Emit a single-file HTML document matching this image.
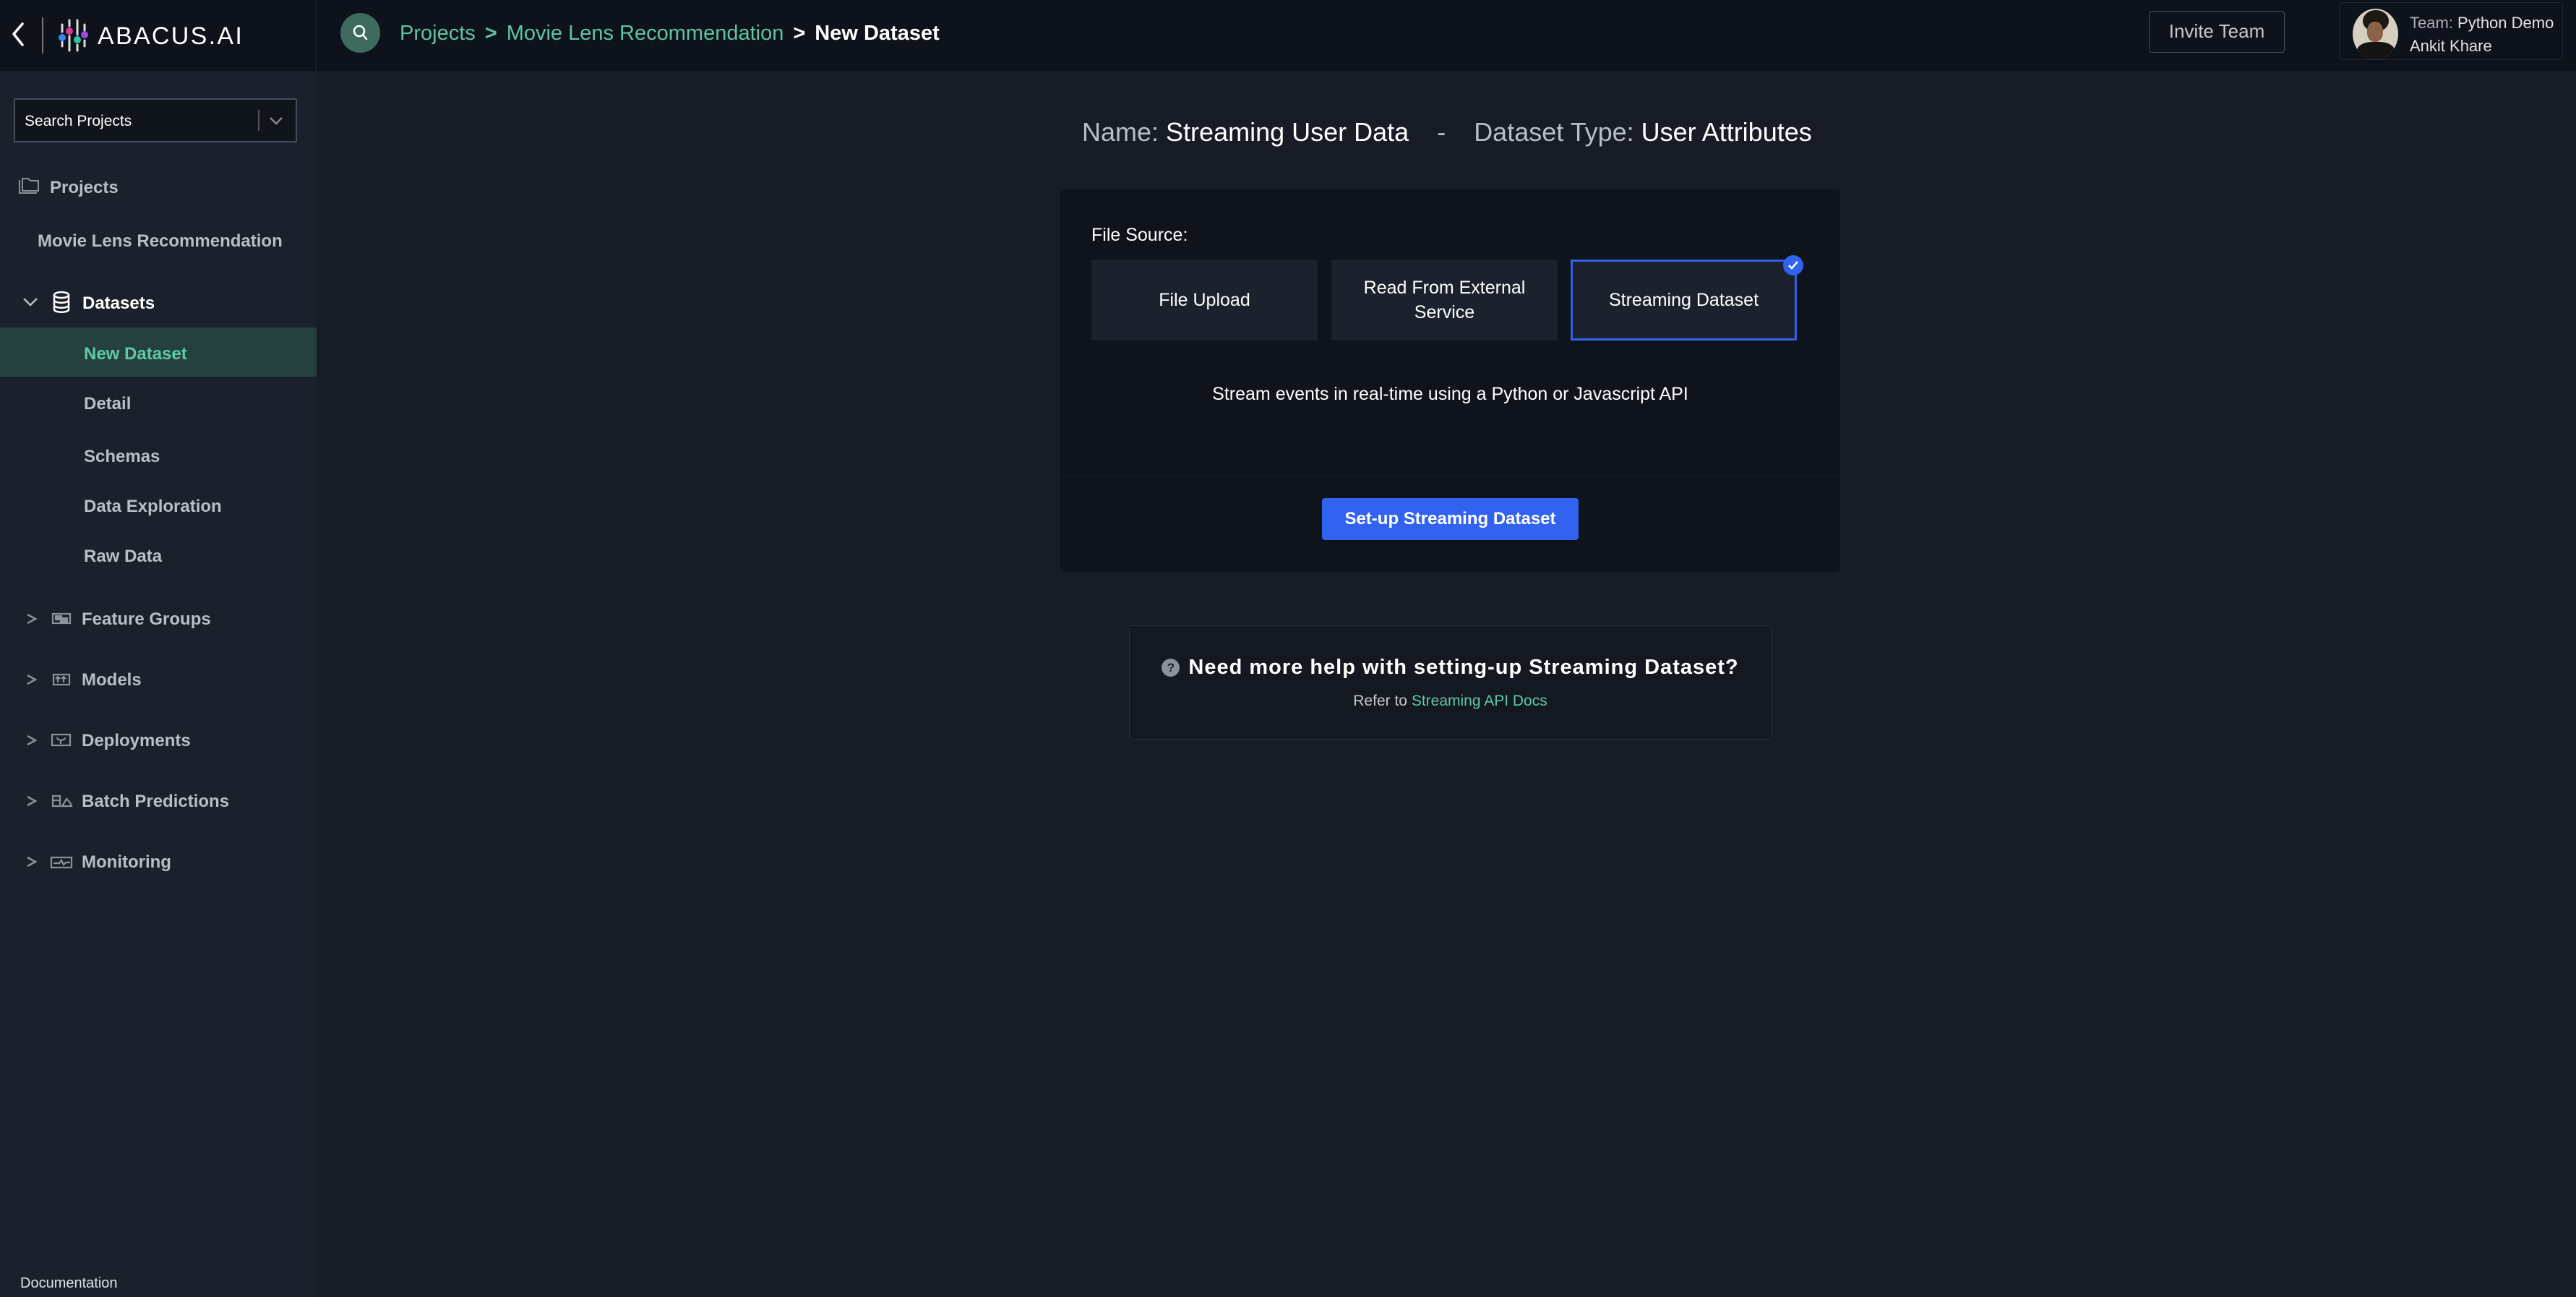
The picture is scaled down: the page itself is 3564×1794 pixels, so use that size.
<!DOCTYPE html>
<html><head><meta charset="utf-8"><style>
*{box-sizing:border-box;margin:0;padding:0}
body{width:3564px;height:1794px;background:#171c26;font-family:"Liberation Sans",sans-serif;position:relative;overflow:hidden;color:#fff}
.abs{position:absolute}
#hdr{left:0;top:0;width:3564px;height:98px;background:#0e121a}
#side{left:0;top:98px;width:438px;height:1696px;background:#1b212c}
.si{position:absolute;font-size:24px;font-weight:bold;color:#b8bdc7;white-space:nowrap;line-height:30px}
</style></head><body>
<div id="hdr" class="abs"></div>
<div class="abs" style="left:436px;top:0;width:2px;height:98px;background:#181d26"></div>
<div id="side" class="abs"></div>
<!-- logo -->
<svg class="abs" style="left:0;top:0" width="438" height="98">
<polyline points="31,33 19,47 31,62" fill="none" stroke="#fff" stroke-width="3.5" stroke-linecap="round" stroke-linejoin="round"/>
<line x1="59" y1="24" x2="59" y2="74" stroke="#777" stroke-width="2"/>
<g stroke="#ddd" stroke-width="3" stroke-linecap="round">
<line x1="86" y1="34" x2="86" y2="44"/><line x1="86" y1="58" x2="86" y2="64"/>
<line x1="96" y1="28" x2="96" y2="36"/><line x1="96" y1="50" x2="96" y2="70"/>
<line x1="107" y1="28" x2="107" y2="48"/><line x1="107" y1="62" x2="107" y2="70"/>
<line x1="117" y1="34" x2="117" y2="42"/><line x1="117" y1="56" x2="117" y2="64"/>
</g>
<circle cx="86" cy="52" r="5" fill="#3b82f6"/><circle cx="96" cy="43" r="5" fill="#d63c8e"/>
<circle cx="107" cy="55" r="5" fill="#2fc4a7"/><circle cx="117" cy="48" r="5" fill="#9b4be0"/>
</svg>
<div class="abs" style="left:135px;top:30px;font-size:34px;letter-spacing:2.3px;color:#fff;line-height:40px">ABACUS.AI</div>
<!-- breadcrumb -->
<div class="abs" style="left:471px;top:18px;width:55px;height:55px;border-radius:50%;background:#3e6a5f"></div>
<svg class="abs" style="left:484px;top:31px" width="30" height="30"><circle cx="13" cy="12" r="7" fill="none" stroke="#fff" stroke-width="2.5"/><line x1="18" y1="17" x2="23" y2="23" stroke="#fff" stroke-width="2.5" stroke-linecap="round"/></svg>
<div class="abs" style="left:553px;top:28px;font-size:29px;line-height:36px;white-space:nowrap;color:#5fc4a2"><span>Projects</span><span style="margin:0 13px;font-weight:bold">&gt;</span><span>Movie Lens Recommendation</span><span style="margin:0 13px;font-weight:bold;color:#fff">&gt;</span><span style="color:#fff;font-weight:bold">New Dataset</span></div>
<!-- header right -->
<div class="abs" style="left:2973px;top:15px;width:188px;height:58px;border:1.5px solid #4a4f58;border-radius:4px;color:#c4c7cd;font-size:26px;line-height:55px;text-align:center">Invite Team</div>
<div class="abs" style="left:3236px;top:3px;width:310px;height:80px;border:1.5px solid #22272f;border-radius:6px"></div>
<div class="abs" style="left:3255px;top:12px;width:63px;height:70px;border-radius:50%;overflow:hidden;background:#d6cfbf">
<div class="abs" style="left:14px;top:2px;width:36px;height:30px;border-radius:50%;background:#1e1814"></div>
<div class="abs" style="left:20px;top:18px;width:22px;height:28px;border-radius:45%;background:#8a6248"></div>
<div class="abs" style="left:6px;top:46px;width:52px;height:30px;border-radius:40% 40% 0 0;background:#141414"></div>
</div>
<div class="abs" style="left:3334px;top:16px;font-size:22px;line-height:32px;color:#dfe2e6;white-space:nowrap"><span style="color:#a9adb5">Team:</span> Python Demo<br>Ankit Khare</div>
<!-- sidebar -->
<div class="abs" style="left:19px;top:136px;width:392px;height:61px;background:#10141b;border:2px solid #474c56;border-radius:2px"></div>
<div class="abs" style="left:34px;top:154px;font-size:21px;color:#fff;line-height:28px">Search Projects</div>
<div class="abs" style="left:357px;top:152px;width:2px;height:29px;background:#555"></div>
<svg class="abs" style="left:370px;top:157px" width="24" height="20"><polyline points="4,6 12,14 20,6" fill="none" stroke="#888" stroke-width="2.5"/></svg>

<svg class="abs" style="left:25px;top:245px" width="32" height="26"><path d="M2 4v18h24M6 2h8l3 3h11v14H6z" fill="none" stroke="#8b9099" stroke-width="2"/></svg>
<div class="si" style="left:69px;top:245px">Projects</div>
<div class="si" style="left:52px;top:319px">Movie Lens Recommendation</div>
<svg class="abs" style="left:29px;top:407px" width="26" height="20"><polyline points="4,6 13,15 22,6" fill="none" stroke="#b8bdc7" stroke-width="2.5"/></svg>
<svg class="abs" style="left:72px;top:402px" width="28" height="32"><ellipse cx="13" cy="6" rx="10" ry="4" fill="none" stroke="#fff" stroke-width="2.5"/><path d="M3 6v20c0 5 20 5 20 0V6M3 13c0 5 20 5 20 0M3 20c0 5 20 5 20 0" fill="none" stroke="#fff" stroke-width="2.5"/></svg>
<div class="si" style="left:114px;top:405px;color:#fff">Datasets</div>
<div class="abs" style="left:0;top:453px;width:438px;height:68px;background:#24413f"></div>
<div class="si" style="left:116px;top:475px;color:#5fc9a4">New Dataset</div>
<div class="si" style="left:116px;top:544px">Detail</div>
<div class="si" style="left:116px;top:617px">Schemas</div>
<div class="si" style="left:116px;top:686px">Data Exploration</div>
<div class="si" style="left:116px;top:755px">Raw Data</div>

<svg class="abs" style="left:0;top:826px" width="110" height="400" fill="none" stroke="#8b9099" stroke-width="2.2">
<g stroke-width="2.5"><polyline points="38,24 49,30 38,36"/><polyline points="38,108 49,114 38,120"/><polyline points="38,192 49,198 38,204"/><polyline points="38,276 49,282 38,288"/><polyline points="38,360 49,366 38,372"/></g>
<rect x="73" y="23" width="24" height="13"/><rect x="77" y="26" width="8" height="5" fill="#8b9099"/><rect x="84" y="29" width="9" height="5" fill="#8b9099"/>
<rect x="74" y="107" width="22" height="14"/><path d="M80 118v-7M77 113l3-3 3 3M88 118v-7M85 113l3-3 3 3"/>
<rect x="72" y="190" width="25" height="15"/><path d="M79 194c0 5 11 5 11 0M84 198v5"/>
<path d="M73 275v14h10v-14zM73 281h10M86 289l6-10 5 5 2 5z"/>
<rect x="71" y="360" width="28" height="14"/><path d="M74 368h8l3-4 3 6 3-3h6"/>
</svg>
<div class="si" style="left:113px;top:842px">Feature Groups</div>
<div class="si" style="left:113px;top:926px">Models</div>
<div class="si" style="left:113px;top:1010px">Deployments</div>
<div class="si" style="left:113px;top:1094px">Batch Predictions</div>
<div class="si" style="left:113px;top:1178px">Monitoring</div>
<div class="abs" style="left:28px;top:1764px;font-size:20px;color:#dfe2e6">Documentation</div>

<!-- main -->
<div class="abs" style="left:1497px;top:161px;font-size:36px;line-height:44px;white-space:nowrap;color:#b9bdc5">Name: <span style="color:#fff">Streaming User Data</span><span style="display:inline-block;width:90px;text-align:center">-</span>Dataset Type: <span style="color:#fff">User Attributes</span></div>
<div class="abs" style="left:1467px;top:262px;width:1079px;height:529px;background:#0f131b;border-radius:6px"></div>
<div class="abs" style="left:1467px;top:659px;width:1079px;height:1px;background:#1b2029"></div>
<div class="abs" style="left:1510px;top:310px;font-size:25px;color:#fff;line-height:30px">File Source:</div>
<div class="abs" style="left:1510px;top:359px;width:313px;height:112px;background:#1c222d;font-size:25px;display:flex;align-items:center;justify-content:center;text-align:center">File Upload</div>
<div class="abs" style="left:1842px;top:359px;width:313px;height:112px;background:#1c222d;font-size:25px;line-height:34px;display:flex;align-items:center;justify-content:center;text-align:center">Read From External<br>Service</div>
<div class="abs" style="left:2173px;top:359px;width:313px;height:112px;background:#1c222d;border:3px solid #3060ec;font-size:25px;display:flex;align-items:center;justify-content:center">Streaming Dataset</div>
<svg class="abs" style="left:2465px;top:351px" width="32" height="32"><circle cx="16" cy="16" r="14" fill="#3263f0"/><polyline points="10,16 14,20 22,11" fill="none" stroke="#fff" stroke-width="2.5"/></svg>
<div class="abs" style="left:1467px;top:528px;width:1079px;text-align:center;font-size:25px;line-height:34px">Stream events in real-time using a Python or Javascript API</div>
<div class="abs" style="left:1829px;top:689px;width:355px;height:58px;background:#3263f0;border-radius:4px;font-size:24px;font-weight:bold;line-height:58px;text-align:center">Set-up Streaming Dataset</div>

<div class="abs" style="left:1562px;top:865px;width:889px;height:158px;border:1.5px solid #22303a;border-radius:4px;background:#131821"></div>
<div class="abs" style="left:1562px;top:903px;width:889px;text-align:center;font-size:29px;font-weight:bold;letter-spacing:1px;line-height:40px;white-space:nowrap"><span style="display:inline-block;width:25px;height:25px;border-radius:50%;background:#8b9099;color:#1b212c;font-size:17px;line-height:25px;letter-spacing:0;vertical-align:3px;margin-right:12px">?</span>Need more help with setting-up Streaming Dataset?</div>
<div class="abs" style="left:1562px;top:955px;width:889px;text-align:center;font-size:21px;line-height:30px;color:#c4c7cd">Refer to <span style="color:#5fc9a4">Streaming API Docs</span></div>
</body></html>
